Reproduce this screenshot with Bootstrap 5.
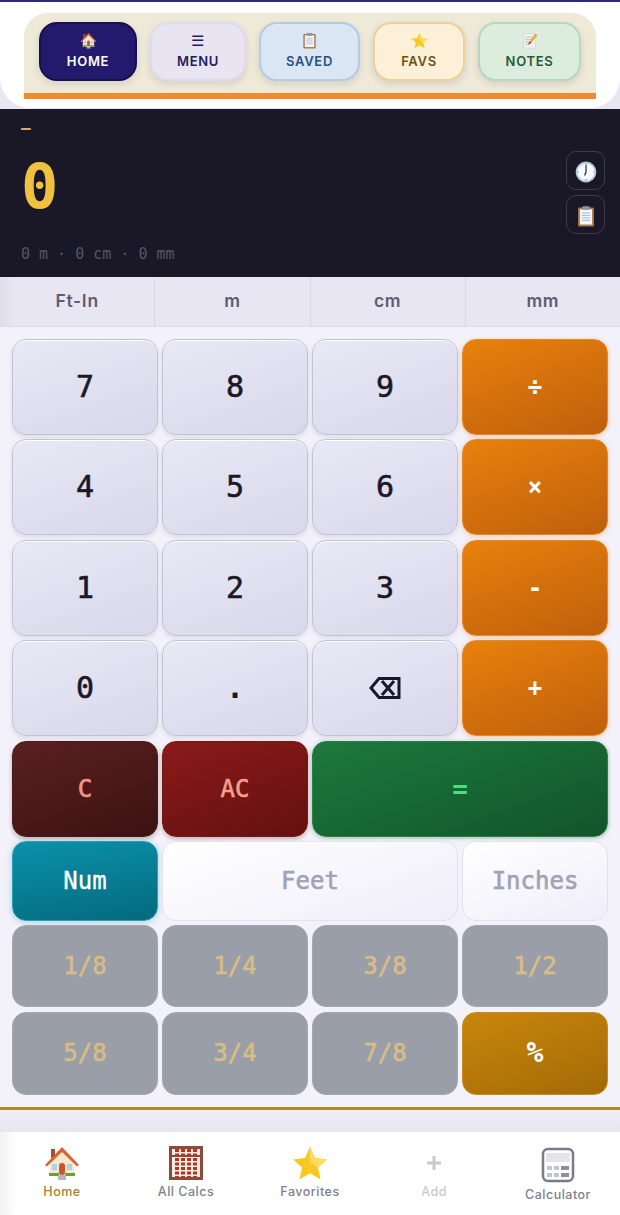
<!DOCTYPE html>
<html lang="en">
<head>
    <meta charset="utf-8">
    <title>Calculator</title>
    <link href="https://cdn.jsdelivr.net/npm/bootstrap@5.3.0/dist/css/bootstrap.min.css" rel="stylesheet">
    <style>
        html, body { height: 1215px; overflow: hidden; }
        body { background: #e8e6f2; font-family: "Inter", "Liberation Sans", sans-serif; border-top: 2px solid #2d2a78; }

        /* top menu */
        .top-shell { height: 106px; background: #fff; border-radius: 0 0 30px 30px; padding: 11px 24px 9px; }
        .top-tray { height: 86px; background: #efe9d8; border-radius: 24px 24px 0 0; border-bottom: 6px solid #f08a2a; padding: 9px 15px 0; gap: 13px; }
        .top-btn { height: 59px; border-radius: 18px; border: 2px solid; padding: 0 0 4px; font-size: 13px; font-weight: 600; letter-spacing: .7px; line-height: 1; box-shadow: 0 3px 7px rgba(60,50,100,.14); }
        .top-btn svg { display: block; margin: 0 auto 6px; }
        .btn-home { width: 98px; background: #231a6e; border-color: #15104e; color: #fff; }
        .btn-menu { width: 96px; background: #e8e4f2; border-color: #dfdbea; color: #241c5c; }
        .btn-saved { width: 101px; background: #dae6f3; border-color: #b4cbe2; color: #2c5282; }
        .btn-favs { width: 92px; background: #fcf0d8; border-color: #ecd298; color: #6f5212; }
        .btn-notes { width: 103px; background: #dcedde; border-color: #b6d8bc; color: #265c36; }
        .menu-glyph { height: 17px; margin-bottom: 6px; font-size: 15px; line-height: 17px; font-weight: 400; }

        /* display */
        .screen { height: 168px; margin-top: 1px; background: #1a1826; padding: 0 15px 0 21px; }
        .screen-dash { height: 50px; padding-top: 9px; color: #d6a868; font: 700 16px/20px "DejaVu Sans Mono", monospace; }
        .screen-value { height: 56px; color: #f0c040; font: 700 62px/56px "DejaVu Sans Mono", monospace; }
        .screen-sub { color: #565468; font: 15px/20px "DejaVu Sans Mono", monospace; margin-top: 29px; }
        .screen-tools { top: 42px; right: 15px; gap: 5px; }
        .tool-btn { width: 39px; height: 39px; padding: 0; border: 1px solid #3e3b48; border-radius: 10px; background: transparent; }

        /* unit tabs */
        .unit-tabs { height: 50px; background: linear-gradient(90deg, #e0dee9, #e8e6f2 14px); border-bottom: 1px solid #dddbe8; }
        .unit-tab { flex: 1 1 0; color: #5e5c72; font-size: 17.5px; font-weight: 600; letter-spacing: .7px; border-right: 1px solid #d8d6e4; }
        .unit-tab:last-child { border-right: 0; }

        /* keypad */
        .pad { height: 805px; background: #f3f2fa; padding: 12px 12px 0; }
        .pad-grid { display: grid; grid-template-columns: repeat(4, 146px); grid-template-rows: repeat(5, 96px) 80px 82px 83px; column-gap: 4px; row-gap: 4.4px; }
        .pad-line { height: 3px; margin: 12px -12px 0; background: #b8842a; }
        .foot-gap { height: 23px; margin: 0 -12px; background: linear-gradient(#f0eff7, #e6e5f0); }
        .key { display: flex; align-items: center; justify-content: center; padding: 0; border-radius: 14px; font-family: "DejaVu Sans Mono", monospace; font-size: 30px; line-height: 1; -webkit-text-stroke: .6px currentColor; }
        .key-num { background: linear-gradient(160deg, #e9e8f5, #d9d8eb); border: 1px solid #c3c2d4; color: #1a1826; box-shadow: 0 2px 4px rgba(60,60,100,.12), inset 0 1px 0 #fff; }
        .key-op { background: linear-gradient(160deg, #e8810c, #bf5f0c); border: 1px solid #e58a2c; color: #fff; font-size: 24px; font-weight: 700; -webkit-text-stroke: 0; box-shadow: 0 1px 5px rgba(232,130,30,.4); }
        .key-c { background: linear-gradient(160deg, #5a2020, #3c1212); border: 1px solid #4c1c1c; color: #f4958a; font-size: 24px; box-shadow: 0 2px 4px rgba(60,20,20,.3); }
        .key-ac { background: linear-gradient(160deg, #8b1a1a, #641010); border: 1px solid #7a1616; color: #f4a090; font-size: 24px; box-shadow: 0 2px 4px rgba(100,20,20,.3); }
        .key-eq { grid-column: span 2; background: linear-gradient(160deg, #1c7a3c, #11542a); border: 1px solid #2a8048; color: #4ade80; font-size: 26px; font-weight: 700; -webkit-text-stroke: 0; box-shadow: 0 1px 4px rgba(20,100,50,.4); }
        .key-mode { background: linear-gradient(170deg, #0a91ab, #056a7c); border: 1px solid #2aa0b4; color: #fff; font-size: 24px; -webkit-text-stroke: .3px currentColor; box-shadow: 0 1px 6px rgba(10,120,170,.3); }
        .key-field { background: linear-gradient(160deg, #fff, #efeef9); border: 1px solid #e2e1ee; color: #a2a1b6; font-size: 24px; }
        .key-feet { grid-column: span 2; }
        .key-frac { background: #9a9ea9; border: 1px solid #a4a8b2; color: #d8bd84; font-size: 24px; }
        .key-pct { background: linear-gradient(160deg, #ca860c, #a26a06); border: 1px solid #c88c18; color: #fff; font-size: 28px; font-weight: 700; -webkit-text-stroke: 0; }
        .key-dot { font-weight: 700; -webkit-text-stroke: 0; }

        /* bottom nav */
        .foot { height: 83px; background: linear-gradient(90deg, #f2f2f6, #fff 18px); }
        .foot-item { flex: 1 1 0; padding-top: 13px; text-align: center; color: #80808e; font-size: 12.5px; font-weight: 500; letter-spacing: .5px; line-height: 16px; }
        .foot-item svg { display: block; margin: 0 auto 3px; }
        .foot-home { color: #a8832a; }
        .foot-add { color: #c9c9d2; }
        .foot-calc { padding-top: 15px; }
        .foot-calc svg { margin-bottom: 4px; }
    </style>
</head>
<body>
    <svg width="0" height="0" class="position-absolute">
        <symbol id="ic-house" viewBox="0 0 36 36">
            <rect x="7" y="4" width="4" height="9" fill="#a0522d"/>
            <path d="M6 17 18 6l12 11v14H6z" fill="#f6e8cf"/>
            <path d="M1 20 18 2l17 18-2 1.500L18 7 3 21.500z" fill="#d9643a"/>
            <rect x="15" y="18" width="6" height="12" rx="3" fill="#c8552b"/>
            <rect x="8" y="19" width="5" height="6" fill="#a9d3e6"/>
            <rect x="23" y="19" width="5" height="6" fill="#a9d3e6"/>
            <rect x="5" y="28" width="10" height="3" fill="#6f9a3e"/>
            <rect x="21" y="28" width="10" height="3" fill="#6f9a3e"/>
            <rect x="14" y="30" width="8" height="5" fill="#b5b5b5"/>
        </symbol>
        <symbol id="ic-clip" viewBox="0 0 36 36">
            <rect x="5" y="4" width="26" height="31" rx="2" fill="#a9744a"/>
            <rect x="8" y="7" width="20" height="25" fill="#f3f6f8"/>
            <rect x="12" y="2" width="12" height="6" rx="1" fill="#8a97a3"/>
            <path d="M11 13h14M11 17h14M11 21h14M11 25h14" stroke="#9fb6cc" stroke-width="1.500"/>
        </symbol>
        <symbol id="ic-star" viewBox="0 0 36 36">
            <path d="m18 2 5 11 12 1.400-9 8 2.600 12L18 28.300 7.400 34.400 10 22.400l-9-8L13 13z" fill="#fbc721"/>
            <path d="m18 2 5 11 12 1.400-9 8-8-5z" fill="#ffdc5d"/>
        </symbol>
        <symbol id="ic-memo" viewBox="0 0 36 36">
            <rect x="5" y="4" width="25" height="30" fill="#f3f1ea" stroke="#c8c8c8"/>
            <path d="M9 11h16M9 16h12M9 21h8M9 26h8" stroke="#9db4c8" stroke-width="1.500"/>
            <path d="m15 27 3-7L30 3l5 4-13 16z" fill="#f2a33c"/>
            <path d="m15 27 3-7 4 3z" fill="#5a4636"/>
        </symbol>
        <symbol id="ic-clock" viewBox="0 0 36 36">
            <circle cx="18" cy="18" r="17" fill="#b9cbd6"/>
            <circle cx="18" cy="18" r="14" fill="#f5fafc"/>
            <path d="M18 18V7M18 18l-2 5" stroke="#2b2b33" stroke-width="2" stroke-linecap="round"/>
            <path d="M18 4v2M18 30v2M4 18h2M30 18h2" stroke="#5f93b8" stroke-width="2"/>
        </symbol>
    </svg>

    <!-- Menu superior -->
    <header class="top-shell">
        <nav class="top-tray d-flex align-items-start">
            <button type="button" class="btn top-btn btn-home"><svg width="17" height="17"><use href="#ic-house"/></svg>HOME</button>
            <button type="button" class="btn top-btn btn-menu"><div class="menu-glyph">☰</div>MENU</button>
            <button type="button" class="btn top-btn btn-saved"><svg width="17" height="17"><use href="#ic-clip"/></svg>SAVED</button>
            <button type="button" class="btn top-btn btn-favs"><svg width="17" height="17"><use href="#ic-star"/></svg>FAVS</button>
            <button type="button" class="btn top-btn btn-notes"><svg width="17" height="17"><use href="#ic-memo"/></svg>NOTES</button>
        </nav>
    </header>

    <!-- Pantalla -->
    <section class="screen position-relative">
        <div class="screen-dash">—</div>
        <div class="screen-value">0</div>
        <div class="screen-sub">0 m · 0 cm · 0 mm</div>
        <div class="screen-tools position-absolute d-flex flex-column">
            <button type="button" class="btn tool-btn"><svg width="22" height="22"><use href="#ic-clock"/></svg></button>
            <button type="button" class="btn tool-btn"><svg width="22" height="22"><use href="#ic-clip"/></svg></button>
        </div>
    </section>

    <!-- Unidades -->
    <div class="unit-tabs d-flex">
        <div class="unit-tab d-flex align-items-center justify-content-center">Ft-In</div>
        <div class="unit-tab d-flex align-items-center justify-content-center">m</div>
        <div class="unit-tab d-flex align-items-center justify-content-center">cm</div>
        <div class="unit-tab d-flex align-items-center justify-content-center">mm</div>
    </div>

    <!-- Teclado -->
    <main class="pad">
        <div class="pad-grid">
            <button type="button" class="btn key key-num">7</button>
            <button type="button" class="btn key key-num">8</button>
            <button type="button" class="btn key key-num">9</button>
            <button type="button" class="btn key key-op">÷</button>
            <button type="button" class="btn key key-num">4</button>
            <button type="button" class="btn key key-num">5</button>
            <button type="button" class="btn key key-num">6</button>
            <button type="button" class="btn key key-op">×</button>
            <button type="button" class="btn key key-num">1</button>
            <button type="button" class="btn key key-num">2</button>
            <button type="button" class="btn key key-num">3</button>
            <button type="button" class="btn key key-op">-</button>
            <button type="button" class="btn key key-num">0</button>
            <button type="button" class="btn key key-num key-dot">.</button>
            <button type="button" class="btn key key-num" aria-label="Borrar">
                <svg width="32" height="24" viewBox="0 0 32 24" fill="none" stroke="#1a1826" stroke-width="3"><path d="M30 2.500H10L2 12l8 9.500h20zM13 5l12 14M25 5 13 19"/></svg>
            </button>
            <button type="button" class="btn key key-op">+</button>
            <button type="button" class="btn key key-c">C</button>
            <button type="button" class="btn key key-ac">AC</button>
            <button type="button" class="btn key key-eq">=</button>
            <button type="button" class="btn key key-mode">Num</button>
            <button type="button" class="btn key key-field key-feet">Feet</button>
            <button type="button" class="btn key key-field">Inches</button>
            <button type="button" class="btn key key-frac">1/8</button>
            <button type="button" class="btn key key-frac">1/4</button>
            <button type="button" class="btn key key-frac">3/8</button>
            <button type="button" class="btn key key-frac">1/2</button>
            <button type="button" class="btn key key-frac">5/8</button>
            <button type="button" class="btn key key-frac">3/4</button>
            <button type="button" class="btn key key-frac">7/8</button>
            <button type="button" class="btn key key-pct">%</button>
        </div>
        <div class="pad-line"></div>
        <div class="foot-gap"></div>
    </main>

    <!-- Navegación inferior -->
    <nav class="foot d-flex">
        <div class="foot-item foot-home"><svg width="36" height="36"><use href="#ic-house"/></svg>Home</div>
        <div class="foot-item">
            <svg width="36" height="36" viewBox="0 0 36 36"><rect x="1" y="1" width="34" height="34" fill="#8a4b3a"/><rect x="4" y="4" width="28" height="28" fill="#f4ece6"/><path d="M4 11h28" stroke="#8a4b3a" stroke-width="2"/><path d="M9 4v28M15 4v28M21 4v28M27 4v28" stroke="#b8341f" stroke-width="4" stroke-dasharray="3 1.500"/></svg>
            All Calcs
        </div>
        <div class="foot-item"><svg width="36" height="36"><use href="#ic-star"/></svg>Favorites</div>
        <div class="foot-item foot-add">
            <svg width="36" height="36" viewBox="0 0 36 36"><path d="M18 11v14M11 18h14" stroke="#c9c9d2" stroke-width="3"/></svg>
            Add
        </div>
        <div class="foot-item foot-calc">
            <svg width="34" height="36" viewBox="0 0 34 36" fill="none"><rect x="2" y="2" width="30" height="32" rx="5" stroke="#7a7a8a" stroke-width="2.500"/><rect x="5" y="6" width="24" height="9" fill="#e4e4ea"/><path d="M6 19h5v4H6zM13 19h5v4h-5zM6 26h5v4H6zM13 26h5v4h-5z" fill="#c4c4cc"/><path d="M20 19h8v4h-8zM20 26h8v4h-8z" fill="#8e8e9a"/></svg>
            Calculator
        </div>
    </nav>
</body>
</html>
